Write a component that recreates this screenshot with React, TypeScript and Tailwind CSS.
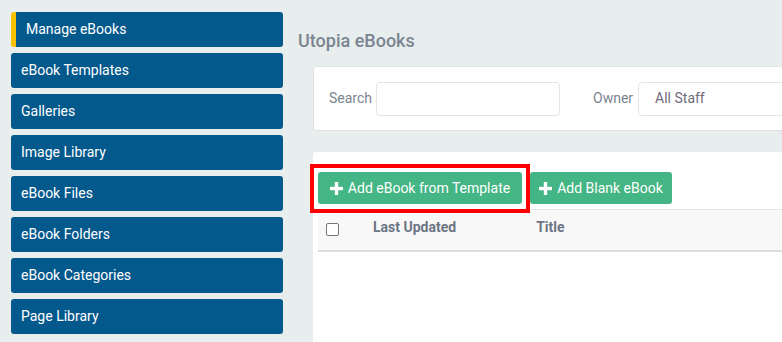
import React from "react";

const items = [
  "Manage eBooks",
  "eBook Templates",
  "Galleries",
  "Image Library",
  "eBook Files",
  "eBook Folders",
  "eBook Categories",
  "Page Library",
];

function Plus() {
  return (
    <svg width="13" height="13" viewBox="0 0 13 13" className="shrink-0">
      <rect x="4.8" y="0" width="3.4" height="13" fill="white" />
      <rect x="0" y="4.8" width="13" height="3.4" fill="white" />
    </svg>
  );
}

export default function App() {
  return (
    <div
      className="flex w-[782px] h-[342px] overflow-hidden bg-[#e8eded]"
      style={{ fontFamily: "Roboto, 'Liberation Sans', sans-serif" }}
    >
      <div className="w-[283px] shrink-0 pl-[11px] pt-[12px] flex flex-col gap-[6px]">
        {items.map((t, i) => (
          <div
            key={t}
            className={
              i === 0
                ? "h-[35px] rounded-[3px] bg-[#03588c] text-white text-[14px] flex items-center border-l-[5px] border-[#f7c100] pl-[10px]"
                : "h-[35px] rounded-[3px] bg-[#03588c] text-white text-[14px] flex items-center pl-[10px]"
            }
          >
            {t}
          </div>
        ))}
      </div>
      <div className="flex-1 min-w-0 pl-[15px] pt-[29px]">
        <div className="text-[18px] font-medium text-[#7a8591] leading-[24px]">Utopia eBooks</div>
        <div className="ml-[15px] mt-[13px] w-[600px] flex flex-col">
          <div className="h-[65px] bg-white border border-[#dfe3e3] rounded-[3px] flex items-center pl-[15px] text-[14px] text-[#7a8390]">
            <span>Search</span>
            <div className="ml-[4px] w-[184px] h-[34px] border border-[#e3e5e5] rounded-[4px]" />
            <span className="ml-[33px]">Owner</span>
            <div className="ml-[5px] w-[200px] h-[34px] border border-[#e3e5e5] rounded-[4px] flex items-center pl-[16px] text-[#6f6a7a]">
              All Staff
            </div>
          </div>
          <div className="mt-[21px] h-[200px] bg-white rounded-[3px] pt-[20px] pl-[5px]">
            <div className="flex gap-[8px] relative">
              <div className="absolute left-[-8px] top-[-8px] w-[220px] h-[49px] border-[4px] border-[#ff0000]" />
              <button className="h-[32px] w-[204px] rounded-[3px] bg-[#44b584] text-white text-[14px] flex items-center justify-center gap-[5px]">
                <Plus />
                <span>Add eBook from Template</span>
              </button>
              <button className="h-[32px] w-[142px] rounded-[3px] bg-[#44b584] text-white text-[14px] flex items-center justify-center gap-[5px] relative">
                <Plus />
                <span>Add Blank eBook</span>
              </button>
            </div>
            <div className="mt-[5px] h-[43px] bg-[#f8f8f8] border-t border-[#e6e6e6] border-b-2 border-b-[#dddddd] flex items-center pb-[2px] text-[14px] font-bold text-[#6c7584]">
              <div className="ml-[8px] w-[13px] h-[13px] border border-[#767676] rounded-[2px] bg-white" />
              <span className="ml-[34px] mb-[4px]">Last Updated</span>
              <span className="ml-[80px] mb-[4px]">Title</span>
            </div>
          </div>
        </div>
      </div>
    </div>
  );
}
